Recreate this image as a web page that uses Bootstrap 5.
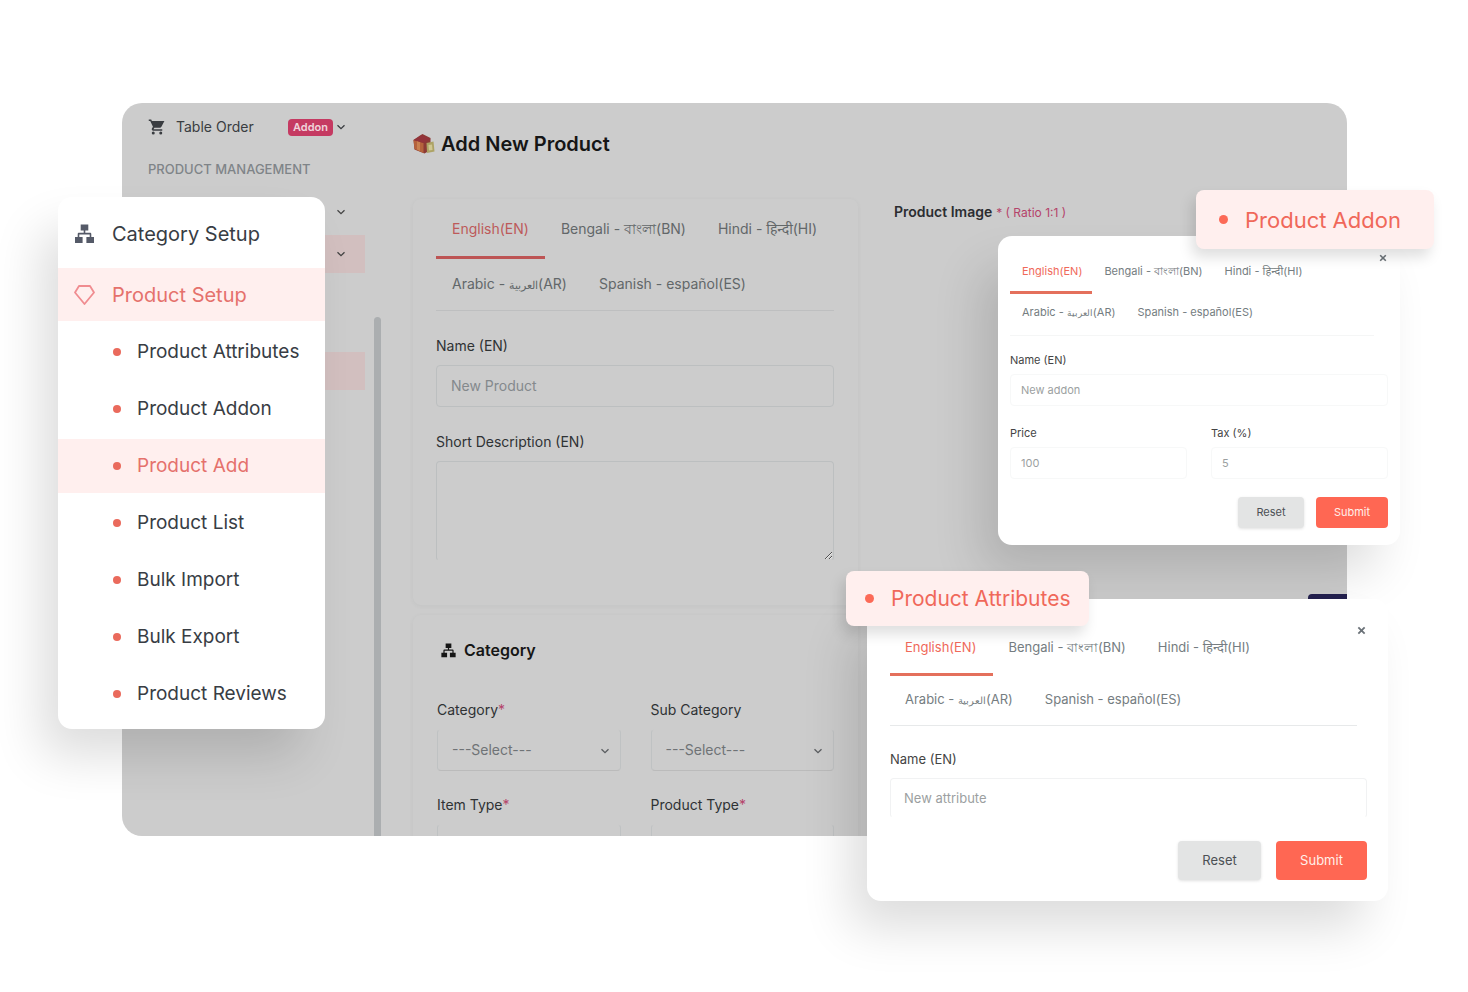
<!DOCTYPE html>
<html lang="en">
<head>
<meta charset="utf-8">
<meta name="viewport" content="width=device-width, initial-scale=1">
<title>Add New Product</title>
<link href="https://cdn.jsdelivr.net/npm/bootstrap@5.3.0/dist/css/bootstrap.min.css" rel="stylesheet">
<style>
:root { --accent: #fc6a57; --tint: #ffefee; }
body { font-family: Inter, "Noto Sans", sans-serif; font-size: 14px; line-height: 20px; color: #2b2d31; background: #fff; }
a { text-decoration: none; color: inherit; }
.stage { padding: 103px 121px 156px 122px; overflow: hidden; }

/* dimmed admin window */
.admin { background: #ccc; border-radius: 20px; overflow: hidden; height: 733px; }
.admin-side { width: 252px; padding: 14px 9px 0 26px; }
.side-row { height: 20px; padding-right: 19px; color: #3a3d41; }
.side-row .side-name { margin-left: 10px; }
.side-title { font-size: 13px; font-weight: 500; color: #7f8488; margin-top: 22px; }
.addon-tag { background: #c53a62; color: #f0d3db; font-size: 11px; font-weight: 600; line-height: 17px; border-radius: 4px; padding: 0 5px; margin-right: 3px; }
.fold { height: 38px; padding-right: 19px; margin-top: 4px; color: #444; }
.side-title + .fold { margin-top: 14px; }
.fold-tint { background: #d2bfbf; }
.fold-open { margin-top: 79px; }
.scroll-track { width: 7px; padding-top: 214px; }
.scroll-thumb { background: #abaeb0; border-radius: 4px 4px 0 0; }
.admin-main { padding: 28px 0 0 32px; }
.admin-main h1 { font-size: 20px; line-height: 26px; font-weight: 600; color: #161616; gap: 6px; }
.cols { display: grid; grid-template-columns: 445fr 453fr; column-gap: 36px; }
.form-box { border-radius: 8px; padding: 8px 24px 0 23px; box-shadow: 0 1px 4px rgba(90,100,100,.07); }
.form-box .field-label { margin-top: 25px; }
.box-first { margin-top: 42px; height: 406px; }
.box-second { margin-top: 10px; padding-top: 23px; padding-left: 24px; height: 260px; }
.box-second h2 { font-size: 16px; line-height: 24px; font-weight: 600; color: #161616; }
.box-second .row { --bs-gutter-x: 30px; margin-top: 38px; }
.admin-main .form-label { color: #2f3234; margin-bottom: 9px; }
.admin-main .form-control, .admin-main .form-select { background-color: transparent; border-color: #bcbfc0; border-radius: 4px; font-size: 14px; line-height: 20px; color: #6f7376; padding: 10px 14px; }
.admin-main .form-control::placeholder { color: #84898c; }
.admin-main textarea.form-control { height: 100px; border-bottom-color: transparent; }
.pick { position: relative; color: #5a5d60; }
.admin-main .form-select { height: 42px; border-color: #ccc #bfc2c3 #bbb; background-image: none; }
.pick svg { position: absolute; right: 11px; top: 17px; pointer-events: none; }
.req { color: #b5436a; }
.image-col { padding-top: 45px; }
.image-col small { font-size: 12px; }
.save-btn { width: 39px; height: 36px; margin-top: 371px; background: #24214f; border: 0; border-radius: 4px 0 0 4px; }

/* language tabs */
.langs { border-bottom: 1px solid #e7e9ea; align-content: flex-start; }
.langs .nav-link { color: #757d81; border-bottom: 3px solid transparent; white-space: nowrap; padding: 0 16px; }
.langs .nav-link.active { color: #f0695a; border-color: #e4705c; }
.langs bdi { font-size: 79%; }
.admin-main .langs { border-color: #bebfc0; height: 104px; }
.admin-main .nav-link { height: 52px; line-height: 44px; margin-bottom: 3px; color: #626769; }
.admin-main .nav-link.active { color: #bd5a5a; border-color: #bd5454; }

/* floating panels */
.float-panel { position: absolute; background: #fff; border-radius: 14px; box-shadow: -20px 30px 50px -4px rgba(0,0,0,.14); }
.menu-panel { left: 58px; top: 197px; width: 267px; padding: 10px 0 5px; }
.menu-head { height: 54px; font-size: 20px; padding: 0 16px; gap: 17px; color: #383d44; }
.menu-head + .menu-head { height: 53px; margin: 7px 0 4px; }
.menu-sub { font-size: 19px; height: 54px; margin-bottom: 3px; padding-left: 55px; gap: 16px; color: #383d44; }
.hot { background: var(--tint); color: #e5716c; }
.dot { width: 8px; height: 8px; border-radius: 50%; background: #ea6a5c; flex: none; }
.tag-panel { position: absolute; background: var(--tint); color: #f0685a; border-radius: 8px; box-shadow: -4px 8px 14px rgba(0,0,0,.13); }
.tag-panel .dot { width: 9px; height: 9px; background: var(--accent); }
.tag-addon { right: 34px; top: 190px; width: 238px; height: 59px; font-size: 22px; padding-left: 23px; gap: 17px; }
.tag-attr { left: 846px; top: 571px; width: 243px; height: 55px; font-size: 21px; padding-left: 19px; gap: 17px; }
.float-panel .form-label { color: #444; }
.float-panel .form-control { border-color: #f1f2f3; border-radius: 4px; }
.float-panel .form-control::placeholder { color: #9c9fa1; }
.x-btn { position: absolute; border: 0; background: none; padding: 0; line-height: 0; color: #6b7278; }
.addon-panel { left: 998px; right: 68px; top: 236px; height: 309px; font-size: 11px; line-height: 16px; padding: 17px 12px 0; }
.addon-panel .x-btn { right: 13px; top: 18px; }
.addon-panel .nav-link { padding: 0 10px 0 12px; height: 41px; line-height: 36px; font-size: 11px; }
.addon-panel .langs { border-color: #f5f6f6; margin-right: 14px; }
.addon-panel .form-label { margin-bottom: 6px; }
.addon-panel .form-control { font-size: 11px; line-height: 16px; padding: 7px 10px; border-color: #f7f8f8; }
.addon-panel .row { --bs-gutter-x: 24px; margin-top: 19px; }
.attr-panel { left: 867px; right: 80px; top: 599px; height: 302px; font-size: 13px; padding: 25px 21px 0 23px; }
.attr-panel .x-btn { right: 22px; top: 27px; }
.attr-panel .nav-link { padding: 0 17px 0 15px; height: 52px; line-height: 46px; font-size: 13px; }
.attr-panel .langs { margin-right: 10px; height: 102px; }
.attr-panel .field-label { margin: 23px 0 9px; }
.attr-panel .form-control { font-size: 13px; line-height: 20px; padding: 9px 13px; border-bottom-color: #fff; }
.btn-reset, .btn-send { border: 0; border-radius: 4px; font-size: 13px; height: 39px; padding: 0; }
.btn-reset { background: #e3e4e4; color: #4c5054; width: 83px; box-shadow: 0 1px 3px rgba(0,0,0,.12); }
.btn-send { background: #ff6753; color: #fff0ea; width: 91px; }
.addon-panel .btn { font-size: 11px; height: 31px; }
.addon-panel .btn-reset { width: 66px; }
.addon-panel .btn-send { width: 72px; }
.gap-btn { gap: 15px; margin-top: 23px; }
.addon-panel .gap-btn { gap: 12px; margin-top: 18px; }
</style>
</head>
<body>
<svg class="d-none">
  <symbol id="chev" viewBox="0 0 10 10"><path d="M1.500 3.200 5 6.700l3.500-3.500" fill="none" stroke="currentColor" stroke-width="1.300"/></symbol>
  <symbol id="tree" viewBox="0 0 20 20"><path fill="currentColor" d="M6.200.5h7.600v6h-3v2.300h4.700c.8 0 1.300.5 1.300 1.300v3h2.700v6h-7.600v-6h3.300v-2.700H4.800v2.700h3.300v6H.500v-6h2.700v-3c0-.8.500-1.300 1.300-1.300h4.700V6.500h-3z"/></symbol>
  <symbol id="cross" viewBox="0 0 10 10"><path d="m1.500 1.500 7 7m0-7-7 7" stroke="currentColor" stroke-width="2"/></symbol>
</svg>
<div class="stage position-relative">
  <div class="admin d-flex">
    <aside class="admin-side flex-shrink-0">
      <a href="#" class="side-row d-flex align-items-center">
        <svg width="18" height="18" viewBox="0 0 24 24" fill="currentColor"><path d="M7 18a2 2 0 1 0 0 4 2 2 0 0 0 0-4zM1 2v2h2l3.600 7.600-1.400 2.400C4.500 15.400 5.500 17 7 17h12v-2H7.400l1.100-2h7.500c.7 0 1.400-.4 1.700-1L21.900 4H5.200l-.9-2zM17 18a2 2 0 1 0 0 4 2 2 0 0 0 0-4z"/></svg>
        <span class="side-name">Table Order</span>
        <span class="addon-tag ms-auto">Addon</span>
        <svg width="10" height="10"><use href="#chev"/></svg>
      </a>
      <div class="side-title">PRODUCT MANAGEMENT</div>
      <div class="fold d-flex align-items-center justify-content-end"><svg width="10" height="10"><use href="#chev"/></svg></div>
      <div class="fold fold-tint d-flex align-items-center justify-content-end"><svg width="10" height="10"><use href="#chev"/></svg></div>
      <div class="fold fold-tint fold-open"></div>
    </aside>
    <div class="scroll-track flex-shrink-0 d-flex"><div class="scroll-thumb w-100"></div></div>
    <main class="admin-main flex-grow-1">
      <h1 class="d-flex align-items-center mb-0">
        <svg width="22" height="22" viewBox="0 0 22 22"><path d="M.500 7 7 2.500 9.500 1l8 4v12l-6 3.500-10-4z" fill="#8c3a34"/><path d="m.5 7 10 3v10l-9-4z" fill="#b5623c"/><path d="m4 8 3 1v9l-3-1.500z" fill="#c9804f"/><path d="M.500 7 9 2l8.500 4-7 4z" fill="#93333a"/><path d="m13.500 10 7-1.500 1 10-7.500 1.500z" fill="#ada365"/><path d="m15.500 12 3.500-.5.500 5.500-3.500.5z" fill="#d0c792"/></svg>
        Add New Product
      </h1>
      <div class="cols">
        <div>
          <section class="form-box box-first">
            <nav class="nav langs">
              <a class="nav-link active" href="#">English(EN)</a><a class="nav-link" href="#">Bengali - বাংলা(BN)</a><a class="nav-link" href="#">Hindi - हिन्दी(HI)</a><a class="nav-link" href="#">Arabic - <bdi>العربية</bdi>(AR)</a><a class="nav-link" href="#">Spanish - español(ES)</a>
            </nav>
            <label class="form-label field-label d-block" for="pname">Name (EN)</label>
            <input class="form-control" id="pname" placeholder="New Product">
            <label class="form-label field-label d-block" for="pdesc">Short Description (EN)</label>
            <textarea class="form-control" id="pdesc"></textarea>
          </section>
          <section class="form-box box-second">
            <h2 class="d-flex align-items-center gap-2 mb-0"><svg class="ms-1" width="15" height="15"><use href="#tree"/></svg>Category</h2>
            <div class="row">
              <div class="col-6"><label class="form-label" for="cat">Category<span class="req">*</span></label><div class="pick"><select class="form-select" id="cat"><option>---Select---</option></select><svg width="10" height="10"><use href="#chev"/></svg></div></div>
              <div class="col-6"><label class="form-label" for="subcat">Sub Category</label><div class="pick"><select class="form-select" id="subcat"><option>---Select---</option></select><svg width="10" height="10"><use href="#chev"/></svg></div></div>
              <div class="col-6 mt-4"><label class="form-label" for="item">Item Type<span class="req">*</span></label><select class="form-select" id="item"></select></div>
              <div class="col-6 mt-4"><label class="form-label" for="ptype">Product Type<span class="req">*</span></label><select class="form-select" id="ptype"></select></div>
            </div>
          </section>
        </div>
        <div class="image-col d-flex flex-column">
          <div><span class="fw-semibold">Product Image</span> <small class="req">* ( Ratio 1:1 )</small></div>
          <button class="save-btn align-self-end" type="button" aria-label="Save"></button>
        </div>
      </div>
    </main>
  </div>

  <nav class="float-panel menu-panel">
    <a href="#" class="menu-head d-flex align-items-center"><svg width="21" height="20" color="#555a68"><use href="#tree"/></svg>Category Setup</a>
    <a href="#" class="menu-head hot d-flex align-items-center"><svg width="21" height="20" viewBox="0 0 21 20"><path d="M5 1h11l4 6.500L10.500 19 1 7.500z" fill="none" stroke="#f08c90" stroke-width="1.800" stroke-linejoin="round"/></svg>Product Setup</a>
    <a href="#" class="menu-sub d-flex align-items-center"><span class="dot"></span>Product Attributes</a>
    <a href="#" class="menu-sub d-flex align-items-center"><span class="dot"></span>Product Addon</a>
    <a href="#" class="menu-sub hot d-flex align-items-center"><span class="dot"></span>Product Add</a>
    <a href="#" class="menu-sub d-flex align-items-center"><span class="dot"></span>Product List</a>
    <a href="#" class="menu-sub d-flex align-items-center"><span class="dot"></span>Bulk Import</a>
    <a href="#" class="menu-sub d-flex align-items-center"><span class="dot"></span>Bulk Export</a>
    <a href="#" class="menu-sub d-flex align-items-center"><span class="dot"></span>Product Reviews</a>
  </nav>

  <section class="float-panel addon-panel">
    <button class="x-btn" type="button" aria-label="Close"><svg width="8" height="8"><use href="#cross"/></svg></button>
    <nav class="nav langs">
      <a class="nav-link active" href="#">English(EN)</a><a class="nav-link" href="#">Bengali - বাংলা(BN)</a><a class="nav-link me-5" href="#">Hindi - हिन्दी(HI)</a><a class="nav-link" href="#">Arabic - <bdi>العربية</bdi>(AR)</a><a class="nav-link" href="#">Spanish - español(ES)</a>
    </nav>
    <label class="form-label d-block mt-3" for="aname">Name (EN)</label>
    <input class="form-control" id="aname" placeholder="New addon">
    <div class="row">
      <div class="col-6"><label class="form-label d-block" for="price">Price</label><input class="form-control" id="price" placeholder="100"></div>
      <div class="col-6"><label class="form-label d-block" for="tax">Tax (%)</label><input class="form-control" id="tax" placeholder="5"></div>
    </div>
    <div class="d-flex justify-content-end gap-btn"><button class="btn btn-reset" type="button">Reset</button><button class="btn btn-send" type="button">Submit</button></div>
  </section>
  <div class="tag-panel tag-addon d-flex align-items-center"><span class="dot"></span>Product Addon</div>

  <section class="float-panel attr-panel">
    <button class="x-btn" type="button" aria-label="Close"><svg width="9" height="9"><use href="#cross"/></svg></button>
    <nav class="nav langs">
      <a class="nav-link active" href="#">English(EN)</a><a class="nav-link" href="#">Bengali - বাংলা(BN)</a><a class="nav-link me-5" href="#">Hindi - हिन्दी(HI)</a><a class="nav-link" href="#">Arabic - <bdi>العربية</bdi>(AR)</a><a class="nav-link" href="#">Spanish - español(ES)</a>
    </nav>
    <label class="form-label field-label d-block" for="tname">Name (EN)</label>
    <input class="form-control" id="tname" placeholder="New attribute">
    <div class="d-flex justify-content-end gap-btn"><button class="btn btn-reset" type="button">Reset</button><button class="btn btn-send" type="button">Submit</button></div>
  </section>
  <div class="tag-panel tag-attr d-flex align-items-center"><span class="dot"></span>Product Attributes</div>
</div>
<script src="https://cdn.jsdelivr.net/npm/bootstrap@5.3.0/dist/js/bootstrap.bundle.min.js"></script>
</body>
</html>
